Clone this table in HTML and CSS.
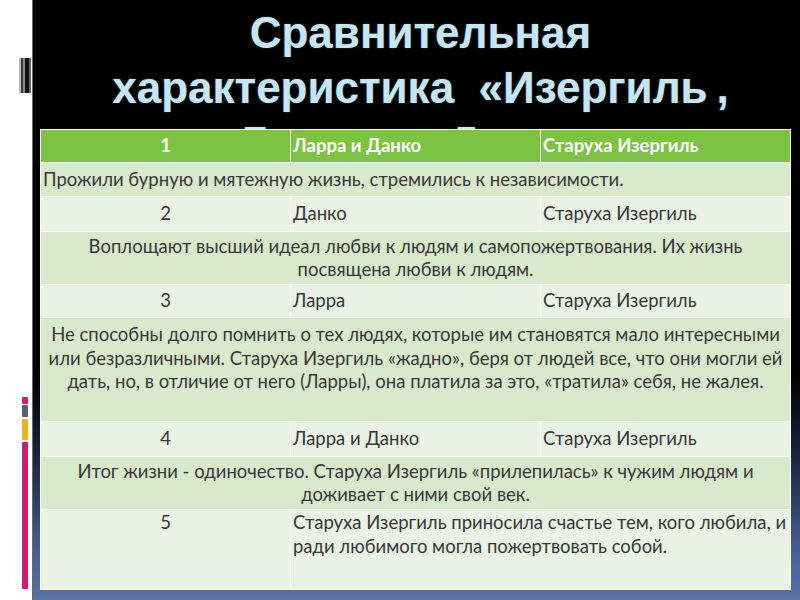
FILE: index.html
```html
<!DOCTYPE html>
<html lang="ru">
<head>
<meta charset="utf-8">
<title>Сравнительная характеристика</title>
<link rel="stylesheet" href="styles.css">
</head>
<body>
<div class="page">
  <aside class="side">
    <div class="barcode"></div>
    <div class="stripe">
      <span class="seg seg-pink-s"></span>
      <span class="seg seg-gray"></span>
      <span class="seg seg-orange"></span>
      <span class="seg seg-pink-l"></span>
    </div>
  </aside>
  <main class="slide">
    <h1 class="title">Сравнительная<br>характеристика&nbsp; «Изергиль&#8201;,<br>Ларра&nbsp; и&nbsp; Данко»</h1>
    <table class="grid">
      <colgroup><col class="c1"><col class="c2"><col class="c3"></colgroup>
      <tr class="hd">
        <td class="num">1</td>
        <td>Ларра и Данко</td>
        <td>Старуха Изергиль</td>
      </tr>
      <tr class="band r1">
        <td colspan="3" class="left">Прожили бурную и мятежную жизнь, стремились к независимости.</td>
      </tr>
      <tr class="plain r2">
        <td class="num">2</td>
        <td>Данко</td>
        <td>Старуха Изергиль</td>
      </tr>
      <tr class="band r3">
        <td colspan="3" class="center">Воплощают высший идеал любви к людям и самопожертвования. Их жизнь<br>посвящена любви к людям.</td>
      </tr>
      <tr class="plain r4">
        <td class="num">3</td>
        <td>Ларра</td>
        <td>Старуха Изергиль</td>
      </tr>
      <tr class="band r5">
        <td colspan="3" class="center top">Не способны долго помнить о тех людях, которые им становятся мало интересными<br>или безразличными. Старуха Изергиль «жадно», беря от людей все, что они могли ей<br>дать, но, в отличие от него (Ларры), она платила за это, «тратила» себя, не жалея.</td>
      </tr>
      <tr class="plain r6">
        <td class="num">4</td>
        <td>Ларра и Данко</td>
        <td>Старуха Изергиль</td>
      </tr>
      <tr class="band r7">
        <td colspan="3" class="center">Итог жизни - одиночество. Старуха Изергиль «прилепилась» к чужим людям и<br>доживает с ними свой век.</td>
      </tr>
      <tr class="plain r8">
        <td class="num top">5</td>
        <td colspan="2" class="top">Старуха Изергиль приносила счастье тем, кого любила, и<br>ради любимого могла пожертвовать собой.</td>
      </tr>
    </table>
  </main>
</div>
</body>
</html>
```

FILE: styles.css
```css
html, body {
  margin: 0;
  padding: 0;
  background: #fff;
}

.page {
  display: flex;
  width: 800px;
  height: 600px;
  overflow: hidden;
}

.side {
  width: 32px;
  flex: 0 0 32px;
  background: #fff;
  display: flex;
  flex-direction: column;
  align-items: flex-start;
}

.barcode {
  margin-top: 58px;
  margin-left: 19px;
  width: 12px;
  height: 35px;
  background: linear-gradient(to right,
    #b8b8b8 0, #b8b8b8 2px,
    #3a3a3a 2px, #3a3a3a 4px,
    #8a8a8a 4px, #8a8a8a 6px,
    #111 6px, #111 10px,
    #666 10px, #666 12px);
}

.stripe {
  margin-top: 304px;
  margin-left: 22px;
  width: 6px;
  display: flex;
  flex-direction: column;
}

.seg {
  display: block;
  width: 6px;
  border-radius: 1px;
}

.seg-pink-s { height: 7px; background: #d81a6c; }
.seg-gray { height: 12px; margin-top: 1px; background: #5b5e6c; }
.seg-orange { height: 21px; margin-top: 2px; background: #efb021; }
.seg-pink-l { height: 147px; margin-top: 2px; background: #d61a70; }

.slide {
  flex: 1;
  border-left: 1px solid #6a6a6a;
  background: linear-gradient(to bottom, #000 0%, #000 62%, #1a2440 76%, #4a6396 93%, #5872a6 100%);
  padding: 5px 10px 10px 7px;
  display: flex;
  flex-direction: column;
}

.title {
  margin: 0;
  height: 125px;
  overflow: hidden;
  padding-left: 10px;
  font-family: "Liberation Sans", Arial, sans-serif;
  font-weight: bold;
  font-size: 44px;
  line-height: 55px;
  color: #c6e6f6;
  text-align: center;
  white-space: nowrap;
  text-shadow: 0 0 2px rgba(160, 210, 240, 0.4);
}

.grid {
  width: 750px;
  border-collapse: collapse;
  table-layout: fixed;
  font-family: Lato, "Open Sans", sans-serif;
  font-size: 18.5px;
  line-height: 23.5px;
  color: #383838;
  border: 1px solid #f2f6ef;
}

.grid td {
  border: 1px solid #f7faf5;
  padding: 0 2px;
  vertical-align: middle;
  white-space: nowrap;
}

.c1, .c2, .c3 { width: 250px; }

.hd td {
  background: #7cc243;
  color: #fff;
  font-weight: bold;
}

.band td { background: #d8e9cc; }
.plain td { background: #e9f2e3; }

.num, .center { text-align: center; }
.left { text-align: left; }
.grid td.top { vertical-align: top; }

.hd { height: 33px; }
.r1 { height: 34px; }
.r2 { height: 35px; }
.r3 { height: 53px; }
.r4 { height: 33px; }
.r5 { height: 104px; }
.r5 td { padding-top: 5px; }
.r6 { height: 35px; }
.r7 { height: 53px; }
.r8 { height: 80px; }
.r8 td { padding-top: 1px; }
```
